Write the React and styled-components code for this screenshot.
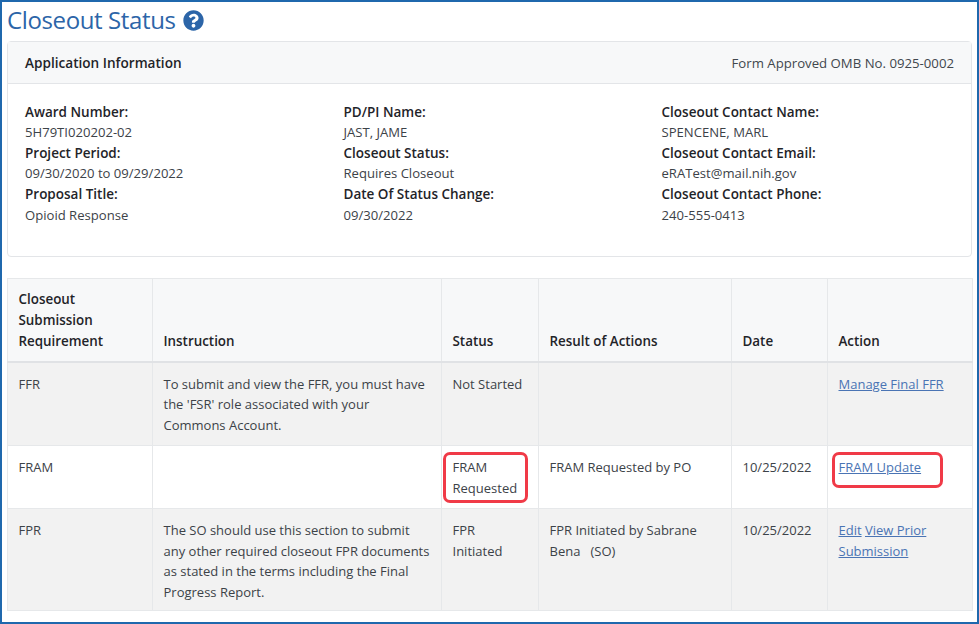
import React from "react";
import styled, { createGlobalStyle } from "styled-components";

const Global = createGlobalStyle`
  html, body { margin: 0; padding: 0; background: #fff; }
  body { font-family: "Open Sans", "Noto Sans", sans-serif; color: #333a41; }
  * { box-sizing: border-box; }
`;

const Frame = styled.div`
  width: 979px;
  height: 624px;
  border: 2px solid #1f68ad;
  padding: 0 5px;
  overflow: hidden;
  background: #fff;
`;

const TitleRow = styled.div`
  display: flex;
  align-items: center;
  gap: 7px;
  height: 39px;
  padding: 0 0 3px;
`;

const Title = styled.h1`
  margin: 0;
  font-size: 24px;
  font-weight: 400;
  letter-spacing: -0.38px;
  line-height: 34px;
  color: #2c65a8;
`;

const HelpIcon = styled.svg`
  width: 21px;
  height: 21px;
  display: block;
`;

const Card = styled.section`
  border: 1px solid #e3e5e8;
  border-radius: 4px;
  height: 216px;
`;

const CardHeader = styled.header`
  display: flex;
  justify-content: space-between;
  align-items: center;
  height: 42px;
  padding: 0 17px;
  background: #f7f8f9;
  border-bottom: 1px solid #e3e5e8;
  font-size: 13.2px;
`;

const CardTitle = styled.span`
  font-weight: 600;
  font-size: 13.6px;
  color: #1f2429;
`;

const Omb = styled.span`
  color: #41474d;
`;

const InfoGrid = styled.div`
  display: grid;
  grid-template-columns: 318.5px 318px 1fr;
  padding: 17.6px 17px 0;
`;

const InfoColumn = styled.dl`
  margin: 0;
  font-size: 13.1px;
  line-height: 20.6px;
`;

const InfoLabel = styled.dt`
  font-weight: 600;
  font-size: 13.5px;
  color: #1f2429;
`;

const InfoValue = styled.dd`
  margin: 0;
  color: #3c4248;
`;

const Table = styled.table`
  width: 965px;
  margin-top: 21px;
  border-collapse: collapse;
  table-layout: fixed;
  font-size: 13px;
  line-height: 20.6px;
  border: 1px solid #e6e8ea;
`;

const Th = styled.th`
  background: #f7f8f9;
  border: 1px solid #e6e8ea;
  border-bottom: 2px solid #e0e2e5;
  padding: 10.4px 10px 9.6px 10.5px;
  text-align: left;
  vertical-align: bottom;
  font-weight: 600;
  font-size: 13.4px;
  color: #1f2429;
`;

const Row = styled.tr`
  background: ${(p) => (p.$shaded ? "#f2f2f2" : "#fff")};
  height: ${(p) => p.$h}px;
`;

const Td = styled.td`
  border: 1px solid #e6e8ea;
  padding: 11px 8px 0 10.5px;
  vertical-align: top;
  color: #3c4248;
  position: relative;
`;

const Link = styled.a`
  color: #4a74b4;
  text-decoration: underline;
`;

const Callout = styled.span`
  position: absolute;
  left: ${(p) => p.$l}px;
  top: 6px;
  width: ${(p) => p.$w}px;
  height: ${(p) => p.$h}px;
  border: 3px solid #f03a47;
  border-radius: 7px;
  pointer-events: none;
`;

const info = [
  [
    ["Award Number:", "5H79TI020202-02"],
    ["Project Period:", "09/30/2020 to 09/29/2022"],
    ["Proposal Title:", "Opioid Response"],
  ],
  [
    ["PD/PI Name:", "JAST, JAME"],
    ["Closeout Status:", "Requires Closeout"],
    ["Date Of Status Change:", "09/30/2022"],
  ],
  [
    ["Closeout Contact Name:", "SPENCENE, MARL"],
    ["Closeout Contact Email:", "eRATest@mail.nih.gov"],
    ["Closeout Contact Phone:", "240-555-0413"],
  ],
];

export default function App() {
  return (
    <>
      <Global />
      <Frame>
        <TitleRow>
          <Title>Closeout Status</Title>
          <HelpIcon viewBox="0 0 512 512" aria-hidden="true">
            <path
              fill="#2c65a8"
              d="M504 256c0 137-111 248-248 248S8 393 8 256 119 8 256 8s248 111 248 248zM262.700 90c-54.500 0-89.300 23-116.500 63.800-3.500 5.300-2.400 12.400 2.700 16.300l34.700 26.300c5.200 3.900 12.600 3 16.700-2.100 17.900-22.700 30.100-35.800 57.300-35.800 20.400 0 45.700 13.100 45.700 32.900 0 15-12.400 22.700-32.500 34-23.500 13.200-54.600 29.600-54.600 70.600V300c0 6.600 5.400 12 12 12h56c6.600 0 12-5.400 12-12v-1.300c0-28.400 83-29.600 83-106.700 0-58-60.200-102-116.500-102zM256 338c-25.400 0-46 20.600-46 46s20.600 46 46 46 46-20.600 46-46-20.600-46-46-46z"
            />
          </HelpIcon>
        </TitleRow>

        <Card>
          <CardHeader>
            <CardTitle>Application Information</CardTitle>
            <Omb>Form Approved OMB No. 0925-0002</Omb>
          </CardHeader>
          <InfoGrid>
            {info.map((col, i) => (
              <InfoColumn key={i}>
                {col.map(([label, value]) => (
                  <React.Fragment key={label}>
                    <InfoLabel>{label}</InfoLabel>
                    <InfoValue>{value}</InfoValue>
                  </React.Fragment>
                ))}
              </InfoColumn>
            ))}
          </InfoGrid>
        </Card>

        <Table>
          <colgroup>
            <col style={{ width: 145 }} />
            <col style={{ width: 289 }} />
            <col style={{ width: 97 }} />
            <col style={{ width: 193 }} />
            <col style={{ width: 96 }} />
            <col style={{ width: 145 }} />
          </colgroup>
          <thead>
            <tr>
              <Th>
                Closeout
                <br />
                Submission
                <br />
                Requirement
              </Th>
              <Th>Instruction</Th>
              <Th>Status</Th>
              <Th>Result of Actions</Th>
              <Th>Date</Th>
              <Th>Action</Th>
            </tr>
          </thead>
          <tbody>
            <Row $shaded $h={84}>
              <Td>FFR</Td>
              <Td>
                To submit and view the FFR, you must have
                <br />
                the 'FSR' role associated with your
                <br />
                Commons Account.
              </Td>
              <Td>Not Started</Td>
              <Td />
              <Td />
              <Td>
                <Link href="#">Manage Final FFR</Link>
              </Td>
            </Row>
            <Row $h={63}>
              <Td>FRAM</Td>
              <Td />
              <Td>
                FRAM Requested
                <Callout $l={1} $w={85} $h={51} />
              </Td>
              <Td>FRAM Requested by PO</Td>
              <Td>10/25/2022</Td>
              <Td>
                <Link href="#">FRAM Update</Link>
                <Callout $l={4} $w={111} $h={36} />
              </Td>
            </Row>
            <Row $shaded $h={102}>
              <Td>FPR</Td>
              <Td>
                The SO should use this section to submit
                <br />
                any other required closeout FPR documents
                <br />
                as stated in the terms including the Final
                <br />
                Progress Report.
              </Td>
              <Td>
                FPR
                <br />
                Initiated
              </Td>
              <Td>FPR Initiated by Sabrane Bena&nbsp;&nbsp; (SO)</Td>
              <Td>10/25/2022</Td>
              <Td>
                <Link href="#">Edit</Link> <Link href="#">View Prior Submission</Link>
              </Td>
            </Row>
          </tbody>
        </Table>
      </Frame>
    </>
  );
}
